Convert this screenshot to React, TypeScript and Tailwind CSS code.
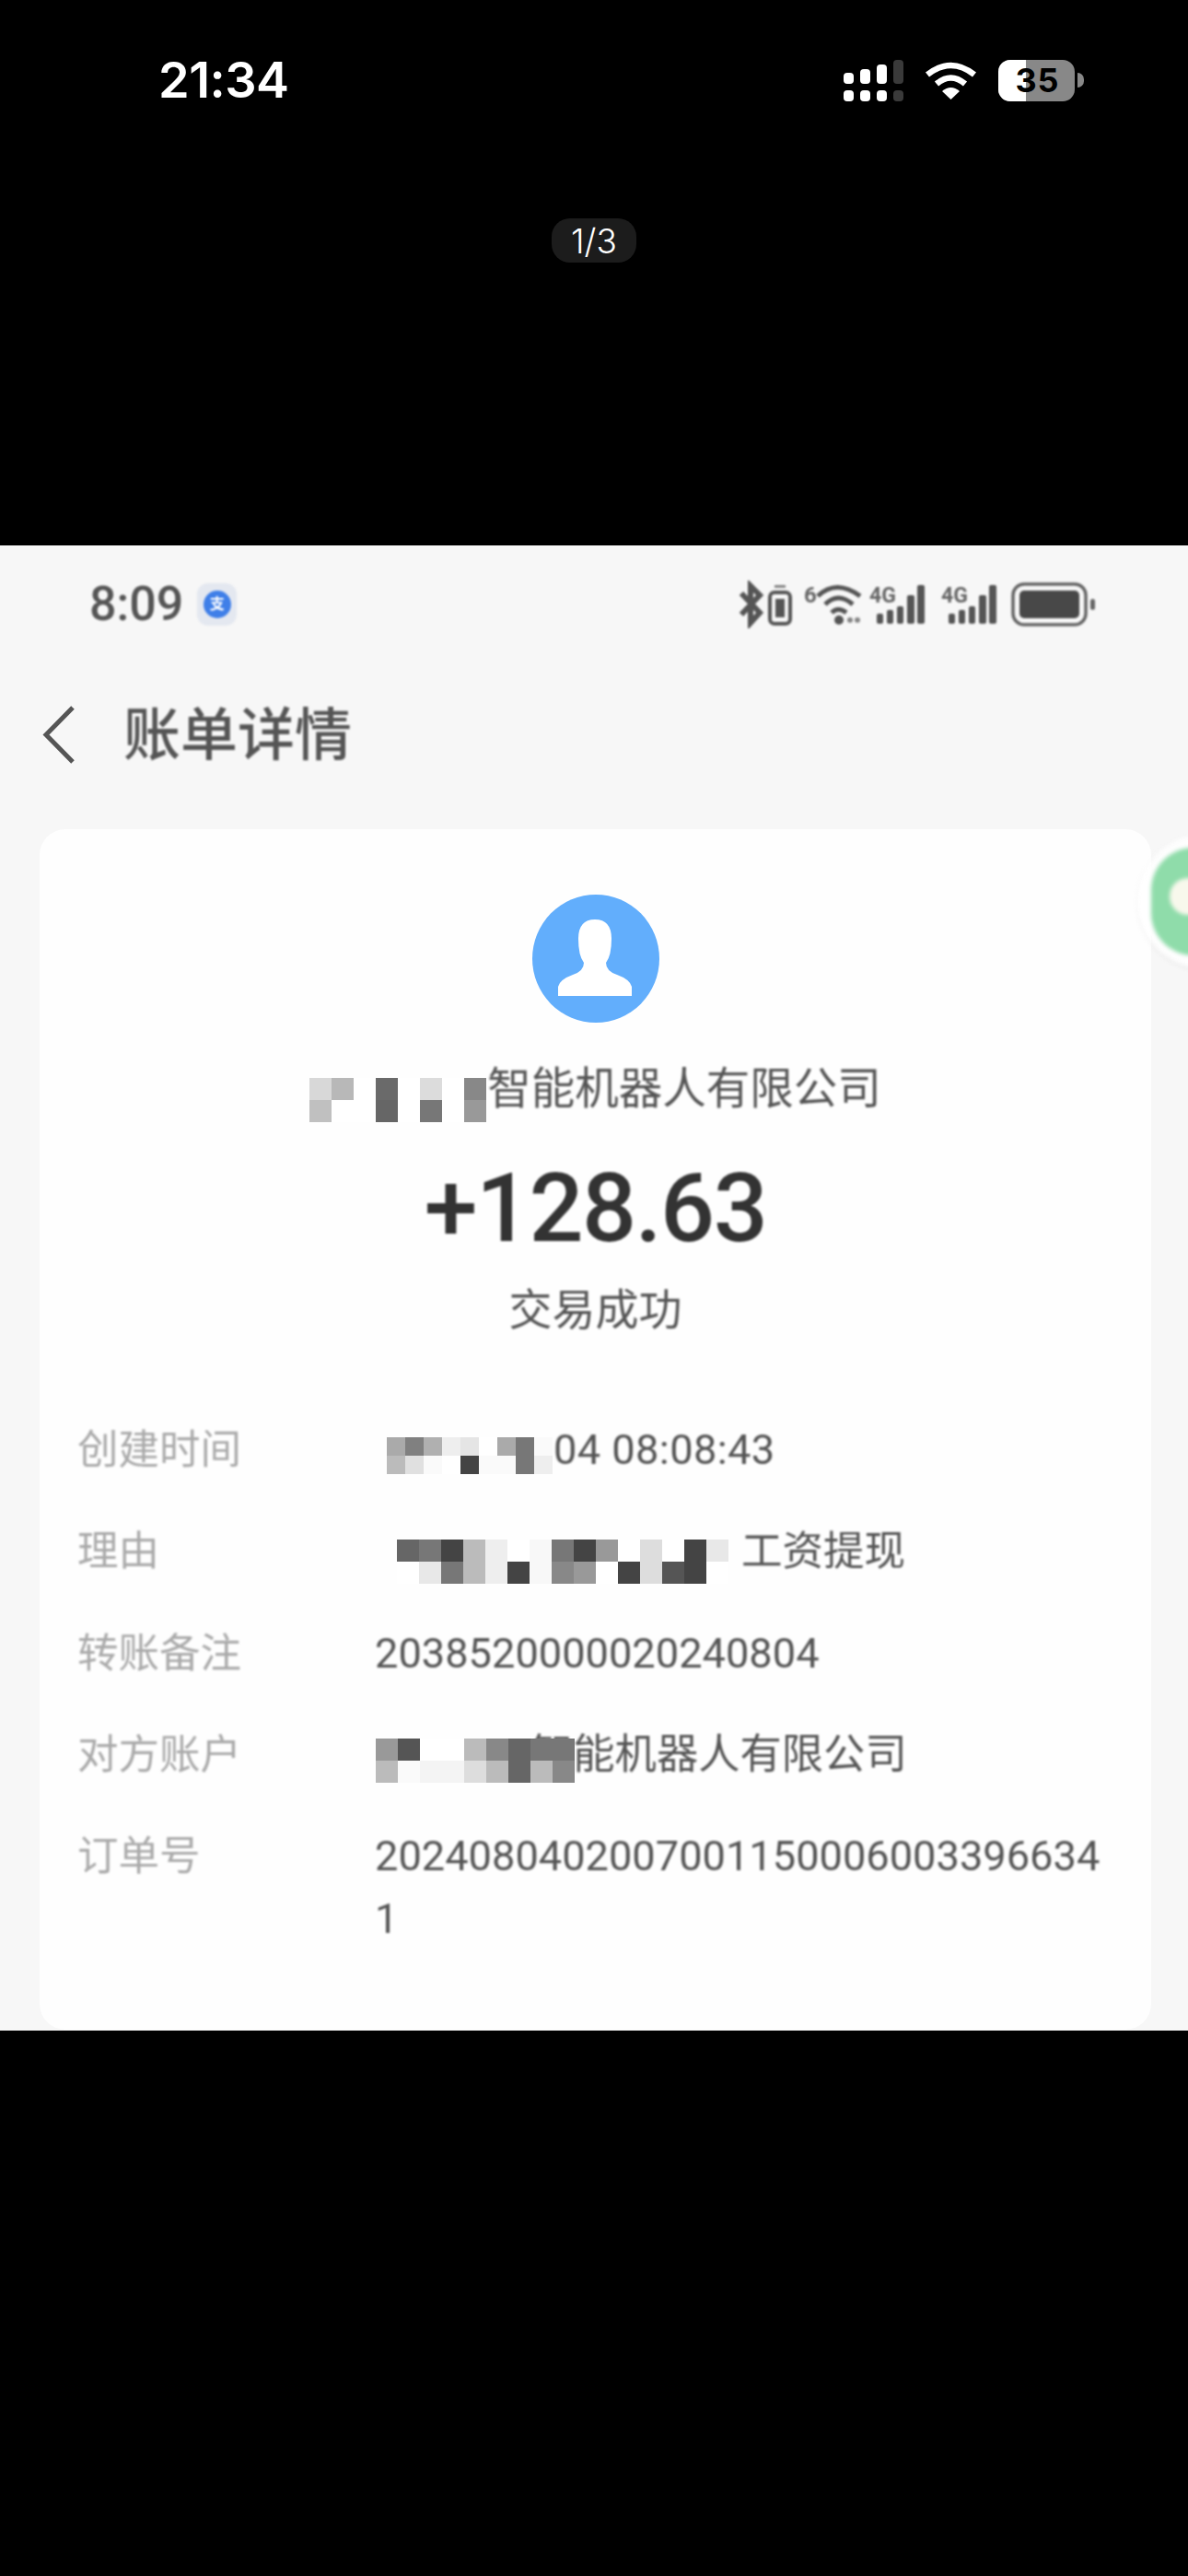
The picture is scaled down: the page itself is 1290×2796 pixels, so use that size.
const nameCells = [
  ['#d8d8d8', '#b8b8b8', '#ffffff', '#6a6a6a', '#ffffff', '#dcdcdc', '#ffffff', '#888888'],
  ['#c0c0c0', '#ffffff', '#ffffff', '#666666', '#ffffff', '#777777', '#ffffff', '#999999'],
];

const timeCells = [
  ['#aaaaaa', '#808080', '#b0b0b0', '#eeeeee', '#e5e5e5', '#ffffff', '#aaaaaa', '#777777', '#fafafa'],
  ['#bbbbbb', '#e0e0e0', '#fafafa', '#ffffff', '#444444', '#fafafa', '#fafafa', '#777777', '#eeeeee'],
];

const reasonCells = [
  ['#666666', '#777777', '#444444', '#bbbbbb', '#eeeeee', '#ffffff', '#f8f8f8', '#777777', '#444444', '#999999', '#ffffff', '#dddddd', '#ffffff', '#444444', '#e8e8e8'],
  ['#ffffff', '#e8e8e8', '#777777', '#bbbbbb', '#eeeeee', '#444444', '#f8f8f8', '#888888', '#999999', '#ffffff', '#444444', '#dddddd', '#555555', '#444444', '#ffffff'],
];

const accountCells = [
  ['#999999', '#555555', '#ffffff', '#ffffff', '#bbbbbb', '#888888', '#666666', '#777777', '#777777'],
  ['#bbbbbb', '#fafafa', '#f4f4f4', '#f4f4f4', '#dddddd', '#bbbbbb', '#666666', '#bbbbbb', '#888888'],
];

function Mosaic({ rows, size }: { rows: string[][]; size: number }) {
  return (
    <div className="relative z-10 flex shrink-0 flex-col">
      {rows.map((row, i) => (
        <div key={i} className="flex">
          {row.map((color, j) => (
            <div key={j} style={{ width: size, height: size, backgroundColor: color }} />
          ))}
        </div>
      ))}
    </div>
  );
}

function DetailRow({ label, children }: { label: string; children: React.ReactNode }) {
  return (
    <div className="flex">
      <div className="w-[323px] shrink-0 text-[44.5px] leading-[68px] text-[#aaaaaa] blur-[1px]">{label}</div>
      <div className="min-w-0 flex-1 text-[45.2px] leading-[68px] text-[#555555]">{children}</div>
    </div>
  );
}

function PhoneStatus() {
  return (
    <div className="flex h-[64px] items-center justify-between pl-[172px] pr-[113px]">
      <span className="text-[54px] font-semibold leading-none tracking-[-0.5px] text-white">21:34</span>
      <div className="flex items-center">
        <svg width="65" height="46" viewBox="0 0 65 46" className="mr-[23px]">
          <rect x="0" y="15" width="11" height="12" rx="4" fill="#fff" />
          <rect x="18" y="11" width="11" height="16" rx="4" fill="#fff" />
          <rect x="36" y="6" width="11" height="21" rx="4" fill="#fff" />
          <rect x="54" y="1" width="11" height="26" rx="4" fill="#3a3a3a" />
          <rect x="0" y="34" width="11" height="12" rx="4" fill="#fff" />
          <rect x="18" y="34" width="11" height="12" rx="4" fill="#fff" />
          <rect x="36" y="34" width="11" height="12" rx="4" fill="#fff" />
          <rect x="54" y="34" width="11" height="12" rx="4" fill="#3a3a3a" />
        </svg>
        <svg width="57" height="41" viewBox="0 0 57 41" className="mr-[23px]">
          <path d="M3 14 Q28.5 -6 54 14" fill="none" stroke="#fff" strokeWidth="6.5" />
          <path d="M13 24 Q28.5 11 44 24" fill="none" stroke="#fff" strokeWidth="6.5" />
          <path d="M19 32 Q28.5 24 38 32 L28.5 41 Z" fill="#fff" />
        </svg>
        <div className="relative flex h-[45px] w-[83px] items-center justify-center overflow-hidden rounded-[13px] bg-[#888888]">
          <div className="absolute inset-y-0 left-0 w-[30px] bg-white" />
          <span className="relative pl-[2px] text-[36px] font-bold leading-none tracking-[1px] text-black">35</span>
        </div>
        <div className="ml-[3px] h-[16px] w-[7px] rounded-r-full bg-[#888888]" />
      </div>
    </div>
  );
}

function AndroidIcons() {
  return (
    <svg width="392" height="52" viewBox="0 0 392 52" className="blur-[1px]">
      <g fill="none" stroke="#555" strokeWidth="6">
        <path d="M5 14 L25 35 L15 46 V6 L25 16 L5 37" />
        <rect x="36" y="13" width="22" height="34" rx="5" strokeWidth="4" />
      </g>
      <rect x="42" y="20" width="10" height="20" fill="#555" />
      <rect x="41" y="5" width="12" height="3" fill="#888" />
      <text x="73" y="24" fontSize="24" fontWeight="700" fill="#666" fontFamily="Roboto, sans-serif">6</text>
      <g fill="none" stroke="#555" strokeWidth="5">
        <path d="M88 17 Q108 -2 134 17" />
        <path d="M96 26 Q110 12 126 26" />
        <path d="M103 35 Q110 28 119 35" />
      </g>
      <circle cx="111" cy="43" r="5" fill="#555" />
      <circle cx="123" cy="43" r="3" fill="#888" />
      <circle cx="131" cy="43" r="3" fill="#888" />
      <g fill="#555">
        <text x="144" y="24" fontSize="23" fontWeight="700" fill="#666" fontFamily="Roboto, sans-serif">4G</text>
        <rect x="152" y="36" width="7" height="11" rx="2" />
        <rect x="163" y="32" width="7" height="15" rx="2" />
        <rect x="174" y="28" width="7" height="19" rx="2" />
        <rect x="185" y="16" width="8" height="31" rx="2" />
        <rect x="196" y="5" width="8" height="42" rx="2" />
        <text x="222" y="24" fontSize="23" fontWeight="700" fill="#666" fontFamily="Roboto, sans-serif">4G</text>
        <rect x="230" y="36" width="7" height="11" rx="2" />
        <rect x="241" y="32" width="7" height="15" rx="2" />
        <rect x="252" y="28" width="7" height="19" rx="2" />
        <rect x="263" y="16" width="8" height="31" rx="2" />
        <rect x="274" y="5" width="8" height="42" rx="2" />
      </g>
      <rect x="300" y="4" width="79" height="44" rx="12" fill="none" stroke="#666" strokeWidth="3.5" />
      <rect x="307" y="11" width="65" height="30" rx="5" fill="#484848" />
      <rect x="384" y="20" width="5" height="12" rx="2.5" fill="#666" />
    </svg>
  );
}

export default function App() {
  return (
    <div className="flex h-[2796px] w-[1290px] flex-col bg-black font-[Inter,sans-serif]">
      <div className="h-[592px] shrink-0 pt-[55px]">
        <PhoneStatus />
        <div className="mt-[118px] flex justify-center">
          <div className="flex h-[48px] w-[92px] items-center justify-center rounded-[20px] bg-[#1c1c1c] text-[37px] font-light leading-none text-white">
            1/3
          </div>
        </div>
      </div>

      <div className="relative h-[1612px] shrink-0 overflow-hidden bg-[#f7f7f7] font-[Roboto,'Noto_Sans_CJK_SC',sans-serif]">
        <div className="flex h-[128px] items-center justify-between pl-[97px] pr-[98px]">
          <div className="flex items-center">
            <span className="text-[52px] font-medium leading-none text-[#555555] blur-[1px]">8:09</span>
            <div className="ml-[15px] flex h-[46px] w-[43px] items-center justify-center rounded-[12px] bg-[#e4e8f0] blur-[1px]">
              <div className="flex h-[30px] w-[30px] items-center justify-center rounded-full bg-[#3f7fe8] text-[16px] font-bold leading-none text-white">
                支
              </div>
            </div>
          </div>
          <AndroidIcons />
        </div>

        <div className="mt-[37px] flex h-[80px] items-center pl-[46px]">
          <svg width="36" height="63" viewBox="0 0 36 63" className="blur-[0.6px]">
            <path d="M33 2 L4 31.5 L33 61" fill="none" stroke="#555555" strokeWidth="5" />
          </svg>
          <span className="ml-[52px] mt-[4px] text-[62px] font-medium leading-none text-[#555555] blur-[1px]">账单详情</span>
        </div>

        <div className="ml-[43px] mt-[63px] h-[1303px] w-[1207px] rounded-[28px] bg-[#fefefe] pt-[71px]">
          <div className="flex flex-col items-center">
            <svg width="138" height="139" viewBox="0 0 138 139" className="blur-[0.6px]">
              <ellipse cx="69" cy="69.5" rx="69" ry="69.5" fill="#62aefc" />
              <path
                d="M28 110 V100 Q30 92 44 87 Q56 83 56 74 Q50 66 50 48 Q50 27 68 27 Q86 27 86 48 Q86 66 80 74 Q80 83 92 87 Q106 92 108 100 V110 Z"
                fill="#ffffff"
              />
            </svg>

            <div className="mt-[42px] flex h-[60px] items-center text-[47.5px] leading-[60px] text-[#555555]">
              <div className="mt-[24px]">
                <Mosaic rows={nameCells} size={24} />
              </div>
              <span className="ml-px blur-[1px]">智能机器人有限公司</span>
            </div>

            <div className="mt-[45px] text-[104px] font-medium leading-[110px] tracking-[-1.5px] text-[#333333] blur-[1px]">
              +128.63
            </div>

            <div className="mt-[25px] text-[47px] leading-[60px] text-[#555555] blur-[1px]">交易成功</div>
          </div>

          <div className="mt-[88px] flex flex-col gap-[42px] pl-[41px] pr-[45px]">
            <DetailRow label="创建时间">
              <div className="flex items-start pl-[13px]">
                <div className="mt-[20px]">
                  <Mosaic rows={timeCells} size={20} />
                </div>
                <span className="ml-px tracking-[0.4px] blur-[0.8px]">04 08:08:43</span>
              </div>
            </DetailRow>
            <DetailRow label="理由">
              <div className="flex items-start pl-[24px]">
                <div className="mt-[21px]">
                  <Mosaic rows={reasonCells} size={24} />
                </div>
                <span className="ml-[14px] text-[44.5px] blur-[1px]">工资提现</span>
              </div>
            </DetailRow>
            <DetailRow label="转账备注">
              <span className="blur-[0.8px]">2038520000020240804</span>
            </DetailRow>
            <DetailRow label="对方账户">
              <div className="flex items-start pl-px">
                <div className="mt-[16px]">
                  <Mosaic rows={accountCells} size={24} />
                </div>
                <span className="ml-[-47px] whitespace-nowrap text-[45.3px] blur-[1px]">智能机器人有限公司</span>
              </div>
            </DetailRow>
            <DetailRow label="订单号">
              <div className="break-all blur-[0.8px]">2024080402007001150006003396634 1</div>
            </DetailRow>
          </div>
        </div>

        {/* floating chat bubble, cut off by the right edge */}
        <div className="absolute left-[1235px] top-[313px] flex h-[147px] w-[147px] items-center justify-center rounded-full bg-white/80 shadow-sm blur-[2px]">
          <div className="relative h-[117px] w-[117px] rounded-[46px] bg-[#8fdcaa]">
            <div className="absolute left-[20px] top-[33px] h-[40px] w-[60px] rounded-full bg-[#f8f8ec]" />
          </div>
        </div>
      </div>

      <div className="flex-1 bg-black" />
    </div>
  );
}
